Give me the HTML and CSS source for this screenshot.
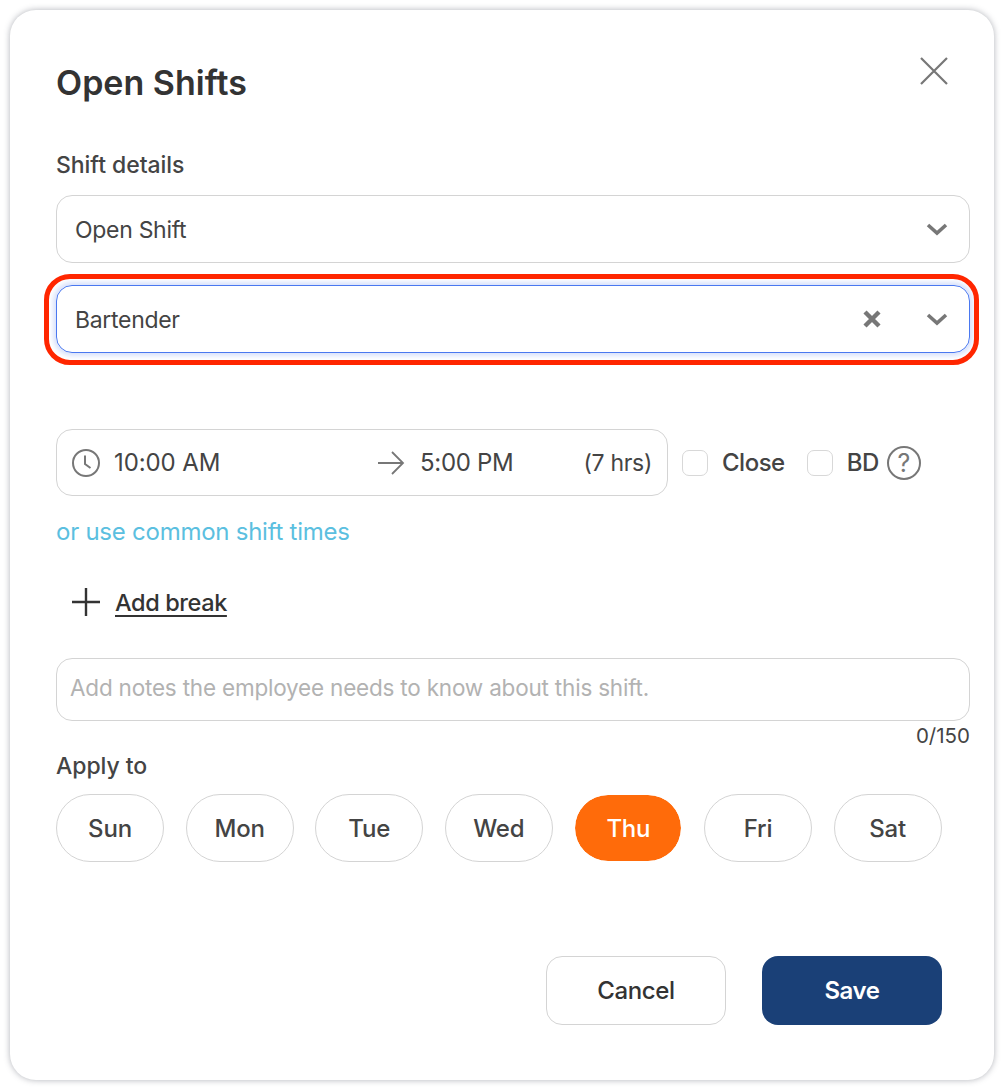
FILE: index.html
```html
<!DOCTYPE html>
<html lang="en">
<head>
  <meta charset="UTF-8">
  <title>Open Shifts</title>
  <link rel="stylesheet" href="styles.css">
</head>
<body>
  <div class="modal">
    <header class="modal-head">
      <h1>Open Shifts</h1>
      <svg class="close-icon" width="32" height="32" viewBox="0 0 32 32"><path d="M3 3 L29 29 M29 3 L3 29" stroke="#777" stroke-width="2.2" fill="none"/></svg>
    </header>

    <div class="label details-label">Shift details</div>
    <div class="field">
      <span class="field-text">Open Shift</span>
      <svg class="chev" width="22" height="14" viewBox="0 0 22 14"><path d="M2 3 L11 11 L20 3" stroke="#777" stroke-width="3.6" fill="none"/></svg>
    </div>
    <div class="field focused">
      <span class="field-text">Bartender</span>
      <svg class="clear" width="20" height="20" viewBox="0 0 20 20"><path d="M3 3 L17 17 M17 3 L3 17" stroke="#777" stroke-width="4.4" fill="none"/></svg>
      <svg class="chev" width="22" height="14" viewBox="0 0 22 14"><path d="M2 3 L11 11 L20 3" stroke="#777" stroke-width="3.6" fill="none"/></svg>
    </div>

    <div class="time-row">
      <div class="time-box">
        <svg class="clock" width="30" height="30" viewBox="0 0 30 30"><circle cx="15" cy="15" r="13" stroke="#777" stroke-width="2" fill="none"/><path d="M14 7.5 V16 L19.5 20" stroke="#777" stroke-width="2" fill="none"/></svg>
        <span class="time-start">10:00 AM</span>
        <svg class="arrow" width="28" height="26" viewBox="0 0 28 26"><path d="M1 13 H26 M15 2 L26 13 L15 24" stroke="#777" stroke-width="1.8" fill="none"/></svg>
        <span class="time-end">5:00 PM</span>
        <span class="hours">(7 hrs)</span>
      </div>
      <label class="check close-check"><span class="box"></span>Close</label>
      <label class="check bd-check"><span class="box"></span>BD</label>
      <span class="help">?</span>
    </div>

    <a class="common-link">or use common shift times</a>

    <div class="add-break">
      <svg width="30" height="30" viewBox="0 0 30 30"><path d="M15 1 V29 M1 15 H29" stroke="#333" stroke-width="2.4" fill="none"/></svg>
      <span>Add break</span>
    </div>

    <div class="notes">Add notes the employee needs to know about this shift.</div>
    <div class="counter">0/150</div>

    <div class="label apply-label">Apply to</div>
    <div class="days">
      <button class="day">Sun</button>
      <button class="day">Mon</button>
      <button class="day">Tue</button>
      <button class="day">Wed</button>
      <button class="day active">Thu</button>
      <button class="day">Fri</button>
      <button class="day">Sat</button>
    </div>

    <div class="actions">
      <button class="btn cancel">Cancel</button>
      <button class="btn save">Save</button>
    </div>
  </div>
</body>
</html>
```

FILE: styles.css
```css
* { box-sizing: border-box; }
html, body { margin: 0; height: 1090px; background: #fff; overflow: hidden; }
body { padding: 10px; font-family: Inter, "Liberation Sans", sans-serif; color: #444; }

.modal {
  width: 984px;
  height: 1070px;
  padding: 0 24px 0 46px;
  background: #fff;
  border-radius: 26px;
  box-shadow: 0 0 6px rgba(60, 64, 80, 0.4);
}

.modal-head { display: flex; justify-content: space-between; height: 140px; padding-top: 44px; }
.modal-head h1 { margin: 0; font-size: 34px; line-height: 58px; height: 58px; font-weight: 600; color: #333; letter-spacing: 0; }
.close-icon { margin-top: 1px; margin-right: 20px; }

.label { font-size: 23px; font-weight: 500; color: #444; letter-spacing: -0.05px; line-height: 30px; }
.details-label { height: 45px; }

.field {
  position: relative;
  display: flex;
  align-items: center;
  width: 914px;
  height: 68px;
  margin-bottom: 22px;
  padding: 2px 21px 0 18px;
  border: 1px solid #d4d4d4;
  border-radius: 16px;
  font-size: 23px;
  letter-spacing: -0.3px;
}
.field-text { flex: 1; }
.clear { margin-right: 44px; margin-top: -2px; }
.chev { margin-top: -2px; }
.focused { border-color: #4a78f0; box-shadow: 0 0 5px 3px #d9e2fb; }
/* red annotation drawn round the focused field */
.focused::after {
  content: "";
  position: absolute;
  inset: -12px -10px -13px -13px;
  border: 5px solid #ff2600;
  border-radius: 26px;
}

.time-row { display: flex; align-items: center; margin-top: 76px; height: 67px; }
.time-box {
  display: flex;
  align-items: center;
  width: 612px;
  height: 67px;
  padding: 0 15px 0 14px;
  border: 1px solid #d4d4d4;
  border-radius: 16px;
  font-size: 24px;
  letter-spacing: -0.3px;
}
.time-start { margin-left: 13px; width: 263px; letter-spacing: -0.1px; }
.time-end { margin-left: 15px; flex: 1; }
.hours { font-size: 23px; }

.check { display: flex; align-items: center; font-size: 24px; font-weight: 500; letter-spacing: -0.5px; }
.box { width: 26px; height: 26px; margin-right: 14px; border: 1px solid #d8d8d8; border-radius: 7px; }
.close-check { margin-left: 14px; }
.bd-check { margin-left: 22px; }
.help {
  width: 34px;
  height: 34px;
  margin-left: 8px;
  border: 2px solid #777;
  border-radius: 50%;
  font-size: 25px;
  line-height: 30px;
  text-align: center;
  color: #777;
}

.common-link { display: block; margin-top: 20px; font-size: 24px; line-height: 32px; color: #5bbfe0; letter-spacing: -0.25px; }

.add-break { display: flex; align-items: center; gap: 14px; margin-top: 39px; margin-left: 15px; height: 30px; font-size: 23.5px; font-weight: 500; color: #333; letter-spacing: -0.4px; }
.add-break span { text-decoration: underline; text-underline-offset: 4px; text-decoration-thickness: 2px; }

.notes {
  width: 914px;
  height: 63px;
  margin-top: 41px;
  padding: 0 13px;
  border: 1px solid #d4d4d4;
  border-radius: 16px;
  font-size: 22.5px;
  line-height: 58px;
  color: #b2b2b2;
  letter-spacing: -0.2px;
}
.counter { width: 914px; font-size: 20.5px; line-height: 30px; text-align: right; color: #444; }

.apply-label { height: 43px; }

.days { display: flex; gap: 21.6px; }
.day {
  width: 108px;
  height: 68px;
  padding: 0;
  border: 1px solid #d4d4d4;
  border-radius: 34px;
  background: #fff;
  background-clip: padding-box;
  font-family: inherit;
  font-size: 24px;
  font-weight: 500;
  color: #444;
  letter-spacing: -0.2px;
}
.day.active { background-color: #ff6b0a; border-color: #fff; color: #fff; }

.actions { display: flex; justify-content: flex-end; gap: 36px; width: 886px; margin-top: 94px; }
.btn { width: 180px; height: 69px; border-radius: 16px; font-family: inherit; font-size: 24px; font-weight: 500; letter-spacing: -0.4px; }
.cancel { background: #fff; border: 1px solid #d4d4d4; color: #333; }
.save { background: #1a4077; border: 0; color: #fff; font-weight: 600; }
```
